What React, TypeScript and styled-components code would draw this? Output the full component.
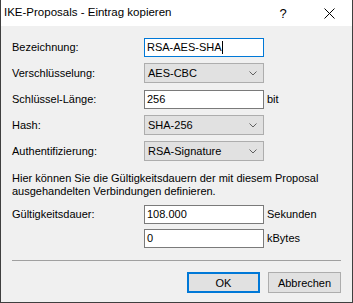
import React from 'react';
import styled, { createGlobalStyle } from 'styled-components';

const GlobalStyle = createGlobalStyle`
	html, body {
		margin: 0;
		padding: 0;
		background: #ffffff;
	}
	body {
		font-family: 'Liberation Sans', Arial, sans-serif;
		font-size: 11px;
		color: #000000;
	}
`;

const Window = styled.div`
	width: 353px;
	height: 303px;
	box-sizing: border-box;
	border: 1px solid #3f3f3f;
	border-top: none;
	display: flex;
	flex-direction: column;
	background: #f0f0f0;
`;

const TitleBar = styled.div`
	height: 26px;
	background: #ffffff;
	display: flex;
	align-items: center;
	padding-left: 3px;
	font-family: 'Liberation Sans', Arial, sans-serif;
	font-size: 11.5px;
`;

const TitleText = styled.span`
	flex: 1;
	padding-bottom: 2px;
`;

const TitleBtn = styled.div<{ $w: number }>`
	width: ${(p) => p.$w}px;
	height: 26px;
	display: flex;
	align-items: center;
	justify-content: center;
	font-size: 13px;
`;

const Body = styled.div`
	flex: 1;
	padding: 11px 11px 0 11px;
	display: flex;
	flex-direction: column;
`;

const FormGrid = styled.div<{ $gap: number }>`
	display: grid;
	grid-template-columns: 132px 120px 1fr;
	grid-auto-rows: 20px;
	row-gap: ${(p) => p.$gap}px;
	align-items: center;
`;

const Label = styled.span`
	white-space: nowrap;
`;

const Unit = styled.span`
	padding-left: 3px;
	white-space: nowrap;
`;

const TextBox = styled.div<{ $focus?: boolean }>`
	height: 19px;
	box-sizing: border-box;
	border: 1px solid ${(p) => (p.$focus ? '#0078d7' : '#7a7a7a')};
	background: #ffffff;
	display: flex;
	align-items: center;
	padding-left: 2px;
`;

const Caret = styled.span`
	display: inline-block;
	width: 1px;
	height: 13px;
	background: #000;
`;

const Combo = styled.div`
	height: 20px;
	box-sizing: border-box;
	border: 1px solid #adadad;
	background: #e1e1e1;
	display: flex;
	align-items: center;
	justify-content: space-between;
	padding: 0 6px 0 3px;
`;

const Description = styled.p`
	margin: 11px 0 6px 0;
	line-height: 13px;
`;

const Separator = styled.div`
	height: 1px;
	background: #a0a0a0;
	margin: 12px 0 11px 0;
`;

const ButtonRow = styled.div`
	display: flex;
	justify-content: flex-end;
	gap: 8px;
`;

const Button = styled.div<{ $default?: boolean }>`
	width: 73px;
	height: 21px;
	box-sizing: border-box;
	border: ${(p) => (p.$default ? '2px solid #0078d7' : '1px solid #adadad')};
	background: #e1e1e1;
	display: flex;
	align-items: center;
	justify-content: center;
	font-size: 11px;
`;

const Chevron = () => (
	<svg width="8" height="5" viewBox="0 0 8 5">
		<path d="M0.5 0.5 L4 4 L7.5 0.5" fill="none" stroke="#606060" strokeWidth="1" />
	</svg>
);

const CloseIcon = () => (
	<svg width="11" height="11" viewBox="0 0 11 11">
		<path d="M0.5 0.5 L10.5 10.5 M10.5 0.5 L0.5 10.5" stroke="#000" strokeWidth="1" />
	</svg>
);

export default function App() {
	return (
		<>
			<GlobalStyle />
			<Window>
				<TitleBar>
					<TitleText>IKE-Proposals - Eintrag kopieren</TitleText>
					<TitleBtn $w={46}>?</TitleBtn>
					<TitleBtn $w={46}>
						<CloseIcon />
					</TitleBtn>
				</TitleBar>
				<Body>
					<FormGrid $gap={6}>
						<Label>Bezeichnung:</Label>
						<TextBox $focus>
							RSA-AES-SHA
							<Caret />
						</TextBox>
						<span />

						<Label>Verschlüsselung:</Label>
						<Combo>
							AES-CBC
							<Chevron />
						</Combo>
						<span />

						<Label>Schlüssel-Länge:</Label>
						<TextBox>256</TextBox>
						<Unit>bit</Unit>

						<Label>Hash:</Label>
						<Combo>
							SHA-256
							<Chevron />
						</Combo>
						<span />

						<Label>Authentifizierung:</Label>
						<Combo>
							RSA-Signature
							<Chevron />
						</Combo>
						<span />
					</FormGrid>

					<Description>
						Hier können Sie die Gültigkeitsdauern der mit diesem Proposal
						<br />
						ausgehandelten Verbindungen definieren.
					</Description>

					<FormGrid $gap={4}>
						<Label>Gültigkeitsdauer:</Label>
						<TextBox>108.000</TextBox>
						<Unit>Sekunden</Unit>

						<span />
						<TextBox>0</TextBox>
						<Unit>kBytes</Unit>
					</FormGrid>

					<Separator />

					<ButtonRow>
						<Button $default>OK</Button>
						<Button>Abbrechen</Button>
					</ButtonRow>
				</Body>
			</Window>
		</>
	);
}
